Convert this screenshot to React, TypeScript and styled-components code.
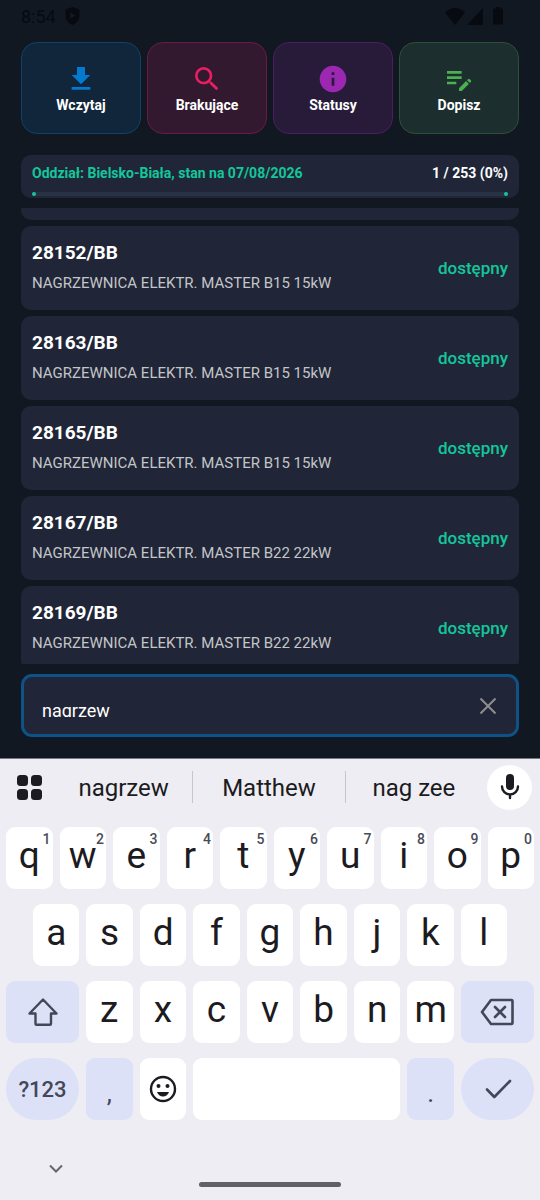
import React, { useState } from "react";
import styled, { createGlobalStyle, css } from "styled-components";

const GlobalStyle = createGlobalStyle`
  *, *::before, *::after { box-sizing: border-box; }
  body { margin: 0; background: #121822; font-family: Roboto, "Liberation Sans", sans-serif; }
  button, input { font: inherit; color: inherit; margin: 0; padding: 0; border: 0; background: none; }
  button { cursor: pointer; }
  ul, h2, p { margin: 0; padding: 0; list-style: none; }
  svg { display: block; flex: none; }
`;

const Screen = styled.div`
  display: flex;
  flex-direction: column;
  height: 100vh;
  overflow: hidden;
  background: #121822;
  color: #fff;
`;

const StatusBar = styled.header`
  display: flex;
  align-items: center;
  justify-content: space-between;
  flex: none;
  height: 32px;
  padding: 0 36px 0 21px;
  color: #070a10;
  font-size: 18px;
`;

const StatusGroup = styled.div<{ $gap: number }>`
  display: flex;
  align-items: center;
  gap: ${(p) => p.$gap}px;
`;

const Content = styled.main`
  display: flex;
  flex: 1;
  flex-direction: column;
  min-height: 0;
  padding: 10px 21px 21px;
`;

const Actions = styled.nav`
  display: grid;
  flex: none;
  grid-template-columns: repeat(4, 1fr);
  gap: 6px;
  margin-bottom: 21px;
`;

const ActionTile = styled.button<{ $fill: string; $line: string; $icon: string }>`
  display: flex;
  flex-direction: column;
  align-items: center;
  justify-content: center;
  height: 92px;
  padding-top: 1px;
  border: 1px solid ${(p) => p.$line};
  border-radius: 16px;
  background: ${(p) => p.$fill};
  font-size: 14px;
  font-weight: 700;
  line-height: 20px;
  svg { color: ${(p) => p.$icon}; }
`;

const Summary = styled.section`
  display: flex;
  flex: none;
  flex-direction: column;
  justify-content: space-between;
  height: 43px;
  margin-bottom: 10px;
  padding: 8px 11px 2px;
  border-radius: 10px;
  background: #202637;
`;

const SummaryLine = styled.div`
  display: flex;
  justify-content: space-between;
  font-size: 14px;
  font-weight: 700;
  line-height: 20px;
`;

const Branch = styled.span`
  color: #14c69b;
`;

const Track = styled.div`
  display: flex;
  justify-content: space-between;
  height: 4px;
  border-radius: 2px;
  background: #273244;
`;

const TrackDot = styled.span`
  width: 4px;
  height: 4px;
  border-radius: 50%;
  background: #14c69b;
`;

const DeviceList = styled.ul`
  display: flex;
  flex: 1;
  flex-direction: column;
  gap: 6px;
  min-height: 0;
  margin-bottom: 10px;
  overflow: hidden;
`;

const DeviceCard = styled.li`
  display: flex;
  flex: none;
  align-items: center;
  justify-content: space-between;
  height: 84px;
  padding: 0 11px;
  border-radius: 10px;
  background: #202637;
`;

const CardTail = styled.li`
  flex: none;
  height: 12px;
  border-radius: 0 0 10px 10px;
  background: #202637;
`;

const DeviceText = styled.div`
  padding-bottom: 2px;
`;

const DeviceCode = styled.h2`
  font-size: 19px;
  font-weight: 700;
  line-height: 24px;
`;

const DeviceName = styled.p`
  margin-top: 8px;
  color: #c4c5c8;
  font-size: 15px;
  line-height: 20px;
`;

const DeviceState = styled.span`
  color: #14c69b;
  font-size: 17px;
  font-weight: 500;
`;

const SearchBox = styled.form`
  display: flex;
  flex: none;
  align-items: center;
  height: 63px;
  padding: 0 17px 0 18px;
  border: 3px solid #0f5288;
  border-radius: 11px;
  background: #202637;
`;

const SearchClip = styled.label`
  flex: 1;
  height: 22px;
  overflow: hidden;
`;

const SearchInput = styled.input`
  display: block;
  width: 100%;
  height: 32px;
  font-size: 18px;
  outline: none;
`;

const ClearButton = styled.button`
  display: flex;
  padding: 2px;
  color: #8e8e8e;
`;

const Keyboard = styled.section`
  display: flex;
  flex: none;
  flex-direction: column;
  border-top: 1px solid #77777d;
  background: #eeedf3;
  color: #1b1b21;
`;

const SuggestionBar = styled.div`
  display: flex;
  align-items: center;
  height: 56px;
  margin-bottom: 12px;
  padding: 0 8px 0 16px;
`;

const Suggestions = styled.div`
  display: grid;
  flex: 1;
  grid-template-columns: 9fr 10fr 9fr;
  margin: 0 5px 0 12px;
`;

const Suggestion = styled.button`
  height: 32px;
  font-size: 24px;
  line-height: 34px;
  & + & { border-left: 1px solid #c5c5cd; }
`;

const MicButton = styled.button`
  display: flex;
  align-items: center;
  justify-content: center;
  width: 45px;
  height: 45px;
  border-radius: 50%;
  background: #fff;
`;

const Keys = styled.div`
  display: flex;
  flex-direction: column;
  gap: 15px;
  padding: 0 6px;
`;

const KeyRow = styled.div<{ $inset?: boolean }>`
  display: grid;
  grid-auto-columns: 1fr;
  grid-auto-flow: column;
  gap: 7px;
  padding: 0 ${(p) => (p.$inset ? 27 : 0)}px;
`;

const WideKeyRow = styled.div`
  display: grid;
  grid-template-columns: 73px repeat(7, 1fr) 73px;
  gap: 7px;
`;

const Key = styled.button<{ $tone?: "plain" | "tint"; $round?: boolean; $span?: number }>`
  position: relative;
  display: flex;
  align-items: center;
  justify-content: center;
  min-width: 0;
  height: 62px;
  border-radius: ${(p) => (p.$round ? 31 : 9)}px;
  background: #fff;
  ${(p) => p.$span && css`grid-column: span ${p.$span};`}
  ${(p) => p.$tone === "tint" && css`background: #dde1f8; color: #444758;`}
`;

const Letter = styled.span`
  padding-bottom: 4px;
  font-size: 37px;
  line-height: 40px;
`;

const Hint = styled.span`
  position: absolute;
  top: 4px;
  right: 2px;
  color: #494b58;
  font-size: 14px;
  font-weight: 500;
  line-height: 16px;
`;

const Mode = styled.span`
  font-size: 22px;
  font-weight: 500;
`;

const Punctuation = styled.span`
  padding-top: 8px;
  font-size: 26px;
  line-height: 32px;
`;

const NavBar = styled.footer`
  display: grid;
  grid-template-columns: 1fr 142px 1fr;
  align-items: end;
  height: 80px;
  padding-bottom: 13px;
`;

const HideButton = styled.button`
  justify-self: start;
  margin: 0 0 10px 48px;
  color: #66666c;
`;

const HomeHandle = styled.span`
  height: 5px;
  border-radius: 3px;
  background: #616065;
`;

const ICONS = {
  download: "M19 9h-4V3H9v6H5l7 7 7-7zM5 18v2h14v-2H5z",
  search:
    "M15.5 14h-.79l-.28-.27A6.471 6.471 0 0 0 16 9.5 6.5 6.5 0 1 0 9.5 16c1.61 0 3.09-.59 4.23-1.57l.27.28v.79l5 4.99L20.49 19l-4.99-5zm-6 0C7.01 14 5 11.99 5 9.5S7.01 5 9.5 5 14 7.01 14 9.5 11.99 14 9.5 14z",
  info: "M12 2C6.48 2 2 6.48 2 12s4.48 10 10 10 10-4.48 10-10S17.52 2 12 2zm1 15h-2v-6h2v6zm0-8h-2V7h2v2z",
  editNote:
    "M3 10h11v2H3v-2zm0-2h11V6H3v2zm0 8h7v-2H3v2zm15.01-3.13.71-.71a.996.996 0 0 1 1.41 0l.71.71c.39.39.39 1.02 0 1.41l-.71.71-2.12-2.12zm-.71.71-5.3 5.3V21h2.12l5.3-5.3-2.12-2.12z",
};

const ACTIONS = [
  { label: "Wczytaj", path: ICONS.download, fill: "#11263b", line: "#0e426c", icon: "#0479d1" },
  { label: "Brakujące", path: ICONS.search, fill: "#32192f", line: "#6b1a43", icon: "#e91e63" },
  { label: "Statusy", path: ICONS.info, fill: "#271b39", line: "#4b1e60", icon: "#9c27b0" },
  { label: "Dopisz", path: ICONS.editNote, fill: "#1c2e2d", line: "#2a5237", icon: "#4caf50" },
];

const DEVICES = [
  { code: "28152/BB", name: "NAGRZEWNICA ELEKTR. MASTER B15 15kW" },
  { code: "28163/BB", name: "NAGRZEWNICA ELEKTR. MASTER B15 15kW" },
  { code: "28165/BB", name: "NAGRZEWNICA ELEKTR. MASTER B15 15kW" },
  { code: "28167/BB", name: "NAGRZEWNICA ELEKTR. MASTER B22 22kW" },
  { code: "28169/BB", name: "NAGRZEWNICA ELEKTR. MASTER B22 22kW" },
];

const stroke = {
  fill: "none",
  stroke: "currentColor",
  strokeLinecap: "round" as const,
  strokeLinejoin: "round" as const,
};

export default function App() {
  const [query, setQuery] = useState("nagrzew");
  const type = (text: string) => setQuery((q) => q + text);

  return (
    <Screen>
      <GlobalStyle />
      <StatusBar>
        <StatusGroup $gap={9}>
          <time>8:54</time>
          <svg width="15" height="18" viewBox="0 0 15 18">
            <path
              fill="currentColor"
              fillRule="evenodd"
              d="M7.500 0 14.500 2.500V8c0 4.600-2.800 8.400-7 10C3.300 16.400.5 12.600.5 8V2.500zM5 5.300v6.400l5.500-3.200z"
            />
          </svg>
        </StatusGroup>
        <StatusGroup $gap={2}>
          <svg width="20" height="17" viewBox="0 0 20 17">
            <path fill="currentColor" d="M10 17 0 4.500C2.800 1.600 6.200 0 10 0s7.200 1.600 10 4.500z" />
          </svg>
          <svg width="16" height="17" viewBox="0 0 16 17">
            <path fill="currentColor" d="M16 0v17H0z" />
          </svg>
          <svg width="19" height="18" viewBox="0 0 19 18">
            <path
              fill="currentColor"
              d="M11 0h4v1.500h2c.6 0 1 .4 1 1v14c0 .6-.4 1-1 1H9c-.6 0-1-.4-1-1v-14c0-.6.4-1 1-1h2z"
            />
          </svg>
        </StatusGroup>
      </StatusBar>

      <Content>
        <Actions>
          {ACTIONS.map((a) => (
            <ActionTile key={a.label} type="button" $fill={a.fill} $line={a.line} $icon={a.icon}>
              <svg width="32" height="32" viewBox="0 0 24 24">
                <path fill="currentColor" d={a.path} />
              </svg>
              {a.label}
            </ActionTile>
          ))}
        </Actions>

        <Summary>
          <SummaryLine>
            <Branch>Oddział: Bielsko-Biała, stan na 07/08/2026</Branch>
            <span>1 / 253 (0%)</span>
          </SummaryLine>
          <Track>
            <TrackDot />
            <TrackDot />
          </Track>
        </Summary>

        <DeviceList>
          <CardTail aria-hidden="true" />
          {DEVICES.map((d) => (
            <DeviceCard key={d.code}>
              <DeviceText>
                <DeviceCode>{d.code}</DeviceCode>
                <DeviceName>{d.name}</DeviceName>
              </DeviceText>
              <DeviceState>dostępny</DeviceState>
            </DeviceCard>
          ))}
        </DeviceList>

        <SearchBox onSubmit={(e) => e.preventDefault()}>
          <SearchClip>
            <SearchInput
              type="text"
              aria-label="Szukaj"
              value={query}
              onChange={(e) => setQuery(e.target.value)}
            />
          </SearchClip>
          <ClearButton type="button" aria-label="Wyczyść" onClick={() => setQuery("")}>
            <svg width="18" height="18" viewBox="0 0 18 18">
              <path {...stroke} strokeLinecap="butt" strokeWidth="2" d="M1.500 1.500l15 15M16.500 1.500l-15 15" />
            </svg>
          </ClearButton>
        </SearchBox>
      </Content>

      <Keyboard>
        <SuggestionBar>
          <button type="button" aria-label="Menu">
            <svg width="27" height="27" viewBox="0 0 27 27" fill="currentColor">
              <rect x="1" y="1" width="11" height="11" rx="3.500" />
              <rect x="15" y="1" width="11" height="11" rx="3.500" />
              <rect x="1" y="15" width="11" height="11" rx="3.500" />
              <rect x="15" y="15" width="11" height="11" rx="3.500" />
            </svg>
          </button>
          <Suggestions>
            {["nagrzew", "Matthew", "nag zee"].map((s) => (
              <Suggestion key={s} type="button" onClick={() => setQuery(s)}>
                {s}
              </Suggestion>
            ))}
          </Suggestions>
          <MicButton type="button" aria-label="Mikrofon">
            <svg width="32" height="32" viewBox="0 0 32 32">
              <rect x="12" y="3" width="8" height="16" rx="4" fill="currentColor" />
              <path {...stroke} strokeWidth="2.400" d="M8 15.500a8 8 0 0 0 16 0M16 23.500v3.500" />
            </svg>
          </MicButton>
        </SuggestionBar>

        <Keys>
          <KeyRow>
            {[..."qwertyuiop"].map((c, i) => (
              <Key key={c} type="button" onClick={() => type(c)}>
                <Letter>{c}</Letter>
                <Hint>{(i + 1) % 10}</Hint>
              </Key>
            ))}
          </KeyRow>
          <KeyRow $inset>
            {[..."asdfghjkl"].map((c) => (
              <Key key={c} type="button" onClick={() => type(c)}>
                <Letter>{c}</Letter>
              </Key>
            ))}
          </KeyRow>
          <WideKeyRow>
            <Key type="button" $tone="tint" aria-label="Shift">
              <svg width="32" height="32" viewBox="0 0 32 32">
                <path {...stroke} strokeWidth="2.400" d="M16 3.500 29.500 17.500H24v10.300q0 1-1 1H9.500q-1 0-1-1V17.500H2.500z" />
              </svg>
            </Key>
            {[..."zxcvbnm"].map((c) => (
              <Key key={c} type="button" onClick={() => type(c)}>
                <Letter>{c}</Letter>
              </Key>
            ))}
            <Key type="button" $tone="tint" aria-label="Usuń" onClick={() => setQuery((q) => q.slice(0, -1))}>
              <svg width="36" height="32" viewBox="0 0 36 32">
                <path
                  {...stroke}
                  strokeWidth="2.600"
                  d="M11 4h20.500q1 0 1 1v22q0 1-1 1H11L2 16zM15 11l10 10M25 11 15 21"
                />
              </svg>
            </Key>
          </WideKeyRow>
          <WideKeyRow>
            <Key type="button" $tone="tint" $round>
              <Mode>?123</Mode>
            </Key>
            <Key type="button" $tone="tint" onClick={() => type(",")}>
              <Punctuation>,</Punctuation>
            </Key>
            <Key type="button" aria-label="Emoji">
              <svg width="28" height="28" viewBox="0 0 28 28">
                <circle cx="14" cy="14" r="12" fill="none" stroke="currentColor" strokeWidth="2.400" />
                <circle cx="9.500" cy="11" r="2" fill="currentColor" />
                <circle cx="18.500" cy="11" r="2" fill="currentColor" />
                <path fill="currentColor" d="M8 17h12c-.8 2.700-3.200 4.500-6 4.500S8.800 19.700 8 17z" />
              </svg>
            </Key>
            <Key type="button" $span={4} aria-label="Spacja" onClick={() => type(" ")} />
            <Key type="button" $tone="tint" onClick={() => type(".")}>
              <Punctuation>.</Punctuation>
            </Key>
            <Key type="button" $tone="tint" $round aria-label="Gotowe">
              <svg width="32" height="32" viewBox="0 0 32 32">
                <path {...stroke} strokeWidth="2.600" d="M5 16.500 12.300 24 28 8" />
              </svg>
            </Key>
          </WideKeyRow>
        </Keys>

        <NavBar>
          <HideButton type="button" aria-label="Ukryj klawiaturę">
            <svg width="16" height="16" viewBox="0 0 16 16">
              <path {...stroke} strokeLinecap="butt" strokeLinejoin="miter" strokeWidth="2" d="M2 4.500 8 10.500 14 4.500" />
            </svg>
          </HideButton>
          <HomeHandle />
        </NavBar>
      </Keyboard>
    </Screen>
  );
}
